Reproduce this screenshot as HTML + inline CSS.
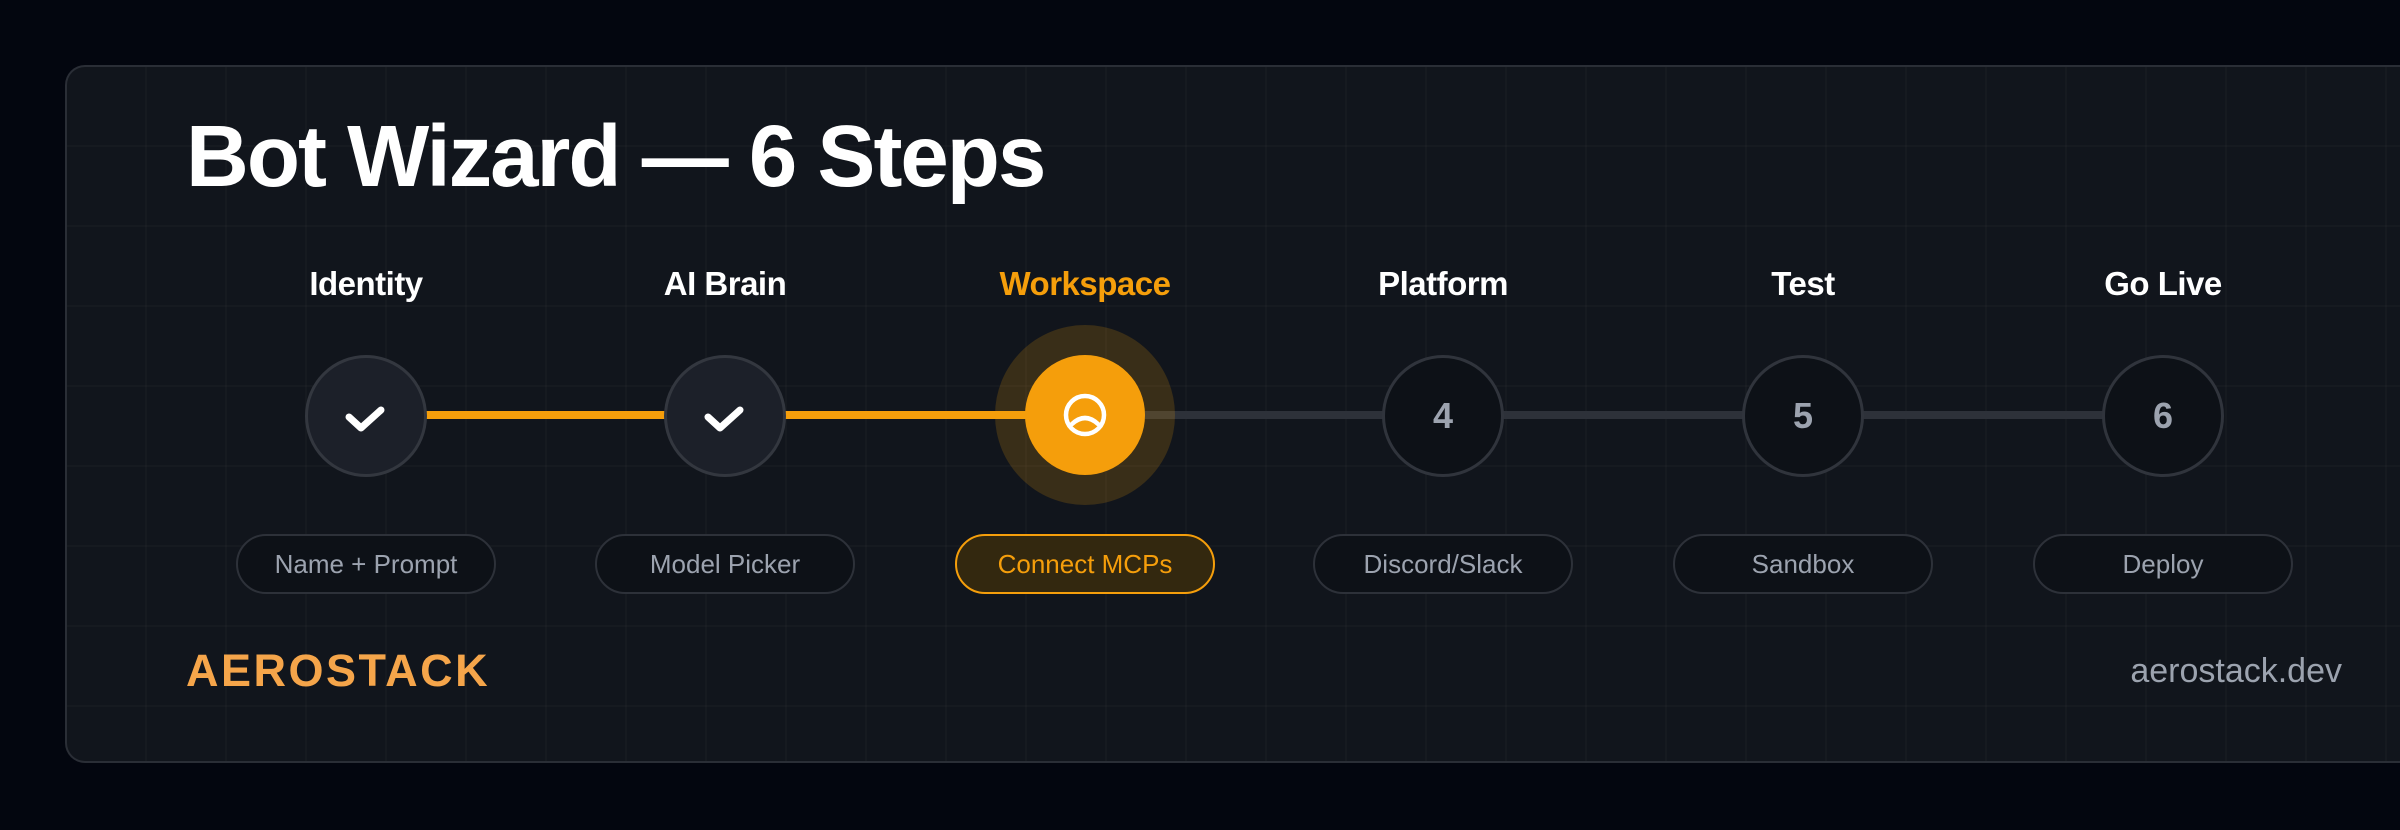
<!DOCTYPE html>
<html><head><meta charset="utf-8"><style>
*{margin:0;padding:0;box-sizing:border-box}
html,body{width:2400px;height:830px;background:#03060f;overflow:hidden;font-family:"Liberation Sans",sans-serif}
.card{position:absolute;left:65px;top:65px;width:2400px;height:698px;border:2px solid #2a2e36;border-right:none;border-radius:20px 0 0 20px;
background-color:#11151c;
background-image:linear-gradient(to right,rgba(255,255,255,0.02) 2px,transparent 2px),linear-gradient(to bottom,rgba(255,255,255,0.02) 2px,transparent 2px);
background-size:80px 80px;background-position:-2px -2px;overflow:hidden}
.title{position:absolute;left:186px;top:107px;font-size:87px;font-weight:700;color:#fff;letter-spacing:-2px;line-height:100px;white-space:nowrap}
.lbl{position:absolute;top:264px;width:300px;margin-left:-150px;text-align:center;font-size:33px;font-weight:700;color:#fff;letter-spacing:-0.5px;line-height:40px}
.lbl.a{color:#f59e0b}
.line{position:absolute;top:411px;height:8px}
.c{position:absolute;top:355px;width:122px;height:122px;margin-left:-61px;border-radius:50%;border:3px solid #30343c;background:#0d1117;display:flex;align-items:center;justify-content:center;font-size:36px;font-weight:700;color:#9ca3af}
.c.done{background:#1c2029;border-color:#33373f}
.glow{position:absolute;top:325px;left:995px;width:180px;height:180px;border-radius:50%;background:rgba(245,158,11,0.18)}
.c.act{background:#f59e0b;border:none}
.pill{position:absolute;top:534px;width:260px;height:60px;margin-left:-130px;border-radius:30px;border:2px solid #2d3139;background:#0d1117;color:#9ca3af;font-size:26px;display:flex;align-items:center;justify-content:center}
.pill.a{background:#33280f;border-color:#f59e0b;color:#f59e0b}
.brand{position:absolute;left:186px;top:645px;font-size:45px;font-weight:700;color:#f5a54a;letter-spacing:2.5px}
.dev{position:absolute;right:58px;top:652px;font-size:34px;color:#9ca3af}
</style></head><body>
<div class="card"></div>
<div class="title">Bot Wizard — 6 Steps</div>
<div class="line" style="left:366px;width:719px;background:#f59e0b"></div>
<div class="line" style="left:1085px;width:1078px;background:#2d3139"></div>
<div class="lbl" style="left:366px">Identity</div>
<div class="lbl" style="left:725px">AI Brain</div>
<div class="lbl a" style="left:1085px">Workspace</div>
<div class="lbl" style="left:1443px">Platform</div>
<div class="lbl" style="left:1803px">Test</div>
<div class="lbl" style="left:2163px">Go Live</div>
<div class="c done" style="left:366px"><svg width="50" height="50" viewBox="0 0 50 50"><path d="M8 26 L20 37 L40 19" fill="none" stroke="#fff" stroke-width="7" stroke-linecap="round" stroke-linejoin="round"/></svg></div>
<div class="c done" style="left:725px"><svg width="50" height="50" viewBox="0 0 50 50"><path d="M8 26 L20 37 L40 19" fill="none" stroke="#fff" stroke-width="7" stroke-linecap="round" stroke-linejoin="round"/></svg></div>
<div class="glow"></div>
<div class="c act" style="left:1085px;width:120px;height:120px;margin-left:-60px;top:355px"><svg width="60" height="60" viewBox="0 0 60 60"><circle cx="30" cy="30" r="19" fill="none" stroke="#fff" stroke-width="4.5"/><path d="M17 39 Q30 27 43 39" fill="none" stroke="#fff" stroke-width="4.5" stroke-linecap="round"/></svg></div>
<div class="c" style="left:1443px">4</div>
<div class="c" style="left:1803px">5</div>
<div class="c" style="left:2163px">6</div>
<div class="pill" style="left:366px">Name + Prompt</div>
<div class="pill" style="left:725px">Model Picker</div>
<div class="pill a" style="left:1085px">Connect MCPs</div>
<div class="pill" style="left:1443px">Discord/Slack</div>
<div class="pill" style="left:1803px">Sandbox</div>
<div class="pill" style="left:2163px">Deploy</div>
<div class="brand">AEROSTACK</div>
<div class="dev">aerostack.dev</div>
</body></html>
